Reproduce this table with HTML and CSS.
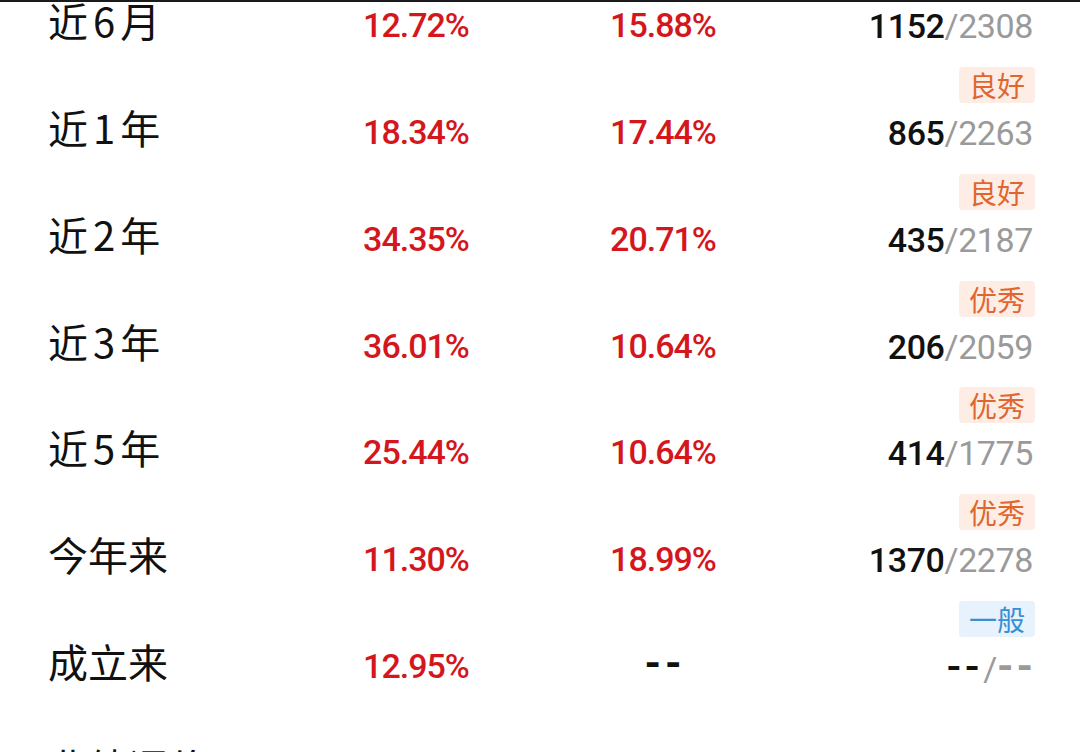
FILE: index.html
```html
<!DOCTYPE html>
<html lang="zh-CN">
<head>
<meta charset="utf-8">
<title>阶段涨幅</title>
<link rel="stylesheet" href="styles.css">
</head>
<body>
<div class="topline"></div>
<div class="table">
  <div class="row first">
    <div class="label">近<span class="dg">6</span>月</div>
    <div class="pct">12.72%</div>
    <div class="pct">15.88%</div>
    <div class="rank"><div class="rv"><b>1152</b><span class="tot">/2308</span></div></div>
  </div>
  <div class="row">
    <div class="label">近<span class="dg">1</span>年</div>
    <div class="pct">18.34%</div>
    <div class="pct">17.44%</div>
    <div class="rank"><span class="badge good">良好</span><div class="rv"><b>865</b><span class="tot">/2263</span></div></div>
  </div>
  <div class="row">
    <div class="label">近<span class="dg">2</span>年</div>
    <div class="pct">34.35%</div>
    <div class="pct">20.71%</div>
    <div class="rank"><span class="badge good">良好</span><div class="rv"><b>435</b><span class="tot">/2187</span></div></div>
  </div>
  <div class="row">
    <div class="label">近<span class="dg">3</span>年</div>
    <div class="pct">36.01%</div>
    <div class="pct">10.64%</div>
    <div class="rank"><span class="badge good">优秀</span><div class="rv"><b>206</b><span class="tot">/2059</span></div></div>
  </div>
  <div class="row">
    <div class="label">近<span class="dg">5</span>年</div>
    <div class="pct">25.44%</div>
    <div class="pct">10.64%</div>
    <div class="rank"><span class="badge good">优秀</span><div class="rv"><b>414</b><span class="tot">/1775</span></div></div>
  </div>
  <div class="row">
    <div class="label">今年来</div>
    <div class="pct">11.30%</div>
    <div class="pct">18.99%</div>
    <div class="rank"><span class="badge good">优秀</span><div class="rv"><b>1370</b><span class="tot">/2278</span></div></div>
  </div>
  <div class="row">
    <div class="label">成立来</div>
    <div class="pct">12.95%</div>
    <div class="pct"><span class="dash">--</span></div>
    <div class="rank"><span class="badge normal">一般</span><div class="rv"><b class="dash">--</b><span class="tot">/<span class="dash">--</span></span></div></div>
  </div>
</div>
<div class="section-title">业绩评价</div>
</body>
</html>
```
FILE: styles.css
```css
html, body {
  margin: 0;
  padding: 0;
  background: #ffffff;
}
body {
  width: 1080px;
  height: 752px;
  overflow: hidden;
  font-family: "Noto Sans CJK SC", "Noto Sans", sans-serif;
  color: #111111;
}
.topline {
  height: 2px;
  background: #1a1a1a;
  margin-bottom: -2px;
  position: relative;
  z-index: 1;
}
.table {
  display: flex;
  flex-direction: column;
}
.row {
  height: 106.8px;
  display: grid;
  grid-template-columns: 268px 200px 294px 1fr;
  align-items: end;
  padding: 0 47px 0 48px;
  box-sizing: border-box;
}
.row.first {
  height: 46.2px;
}
.label {
  font-size: 40px;
  line-height: 40px;
  height: 40px;
  white-space: nowrap;
  position: relative;
  top: -6px;
}
.dg {
  margin: 0 5px;
}
.pct {
  text-align: center;
  font-family: Roboto, "Liberation Sans", sans-serif;
  font-weight: 500;
  font-size: 34px;
  line-height: 40px;
  color: #d4161d;
  letter-spacing: -1px;
  position: relative;
  top: -1px;
}
.dash {
  font-size: 42px;
  font-weight: 700;
  letter-spacing: 4px;
  color: #111111;
}
.pct .dash {
  margin-right: -4px;
}
.rank {
  display: flex;
  flex-direction: column;
  align-items: flex-end;
  gap: 10px;
}
.rv {
  font-family: Roboto, "Liberation Sans", sans-serif;
  font-size: 34px;
  line-height: 40px;
  height: 40px;
  white-space: nowrap;
  letter-spacing: -0.4px;
}
.rv b {
  font-weight: 500;
  color: #111111;
}
.tot {
  color: #9a9a9a;
  font-weight: 400;
}
.tot .dash {
  color: #9a9a9a;
  letter-spacing: 3px;
  margin-right: -3px;
}
.badge {
  display: inline-block;
  font-size: 28px;
  line-height: 36px;
  height: 36px;
  padding: 0 10px;
  border-radius: 4px;
  margin-right: -2px;
}
.badge.good {
  background: #fdede5;
  color: #e0662f;
}
.badge.normal {
  background: #e7f2fc;
  color: #3a8fd3;
}
.section-title {
  margin: 59px 0 0 48px;
  font-size: 40px;
  line-height: 40px;
}
```
